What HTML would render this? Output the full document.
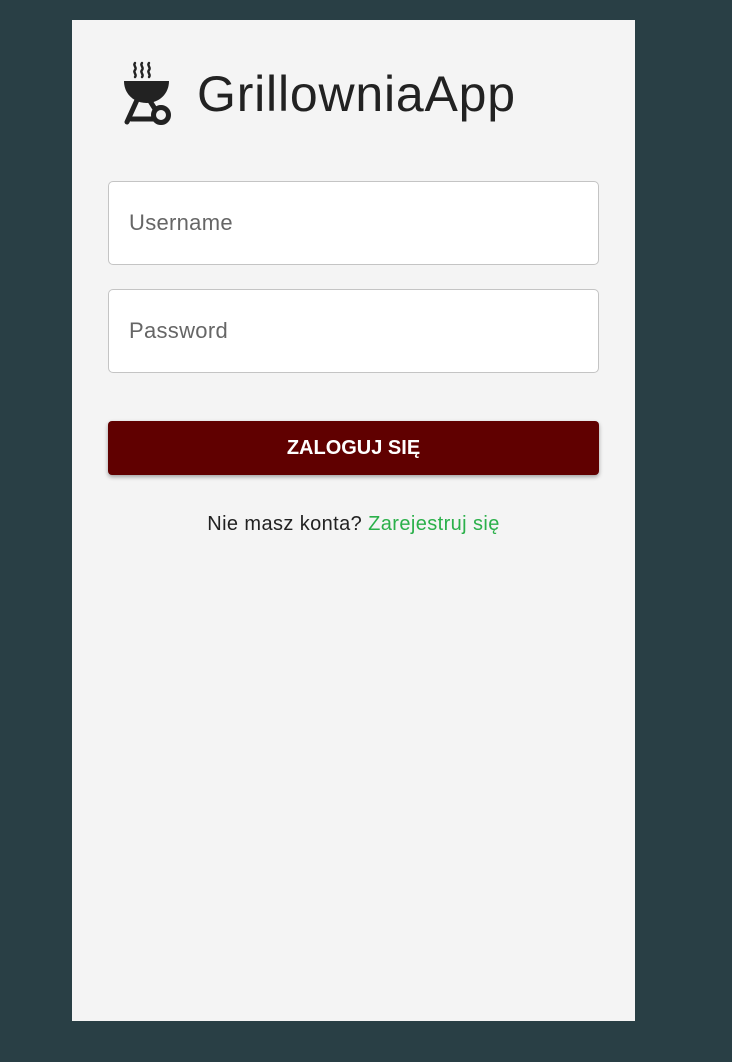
<!DOCTYPE html>
<html><head><style>
body{margin:0;width:732px;height:1062px;background:#293f45;font-family:"Liberation Sans",sans-serif;position:relative;overflow:hidden}
.card{position:absolute;left:72px;top:20px;width:563px;height:1001px;background:#f4f4f4}
.title{position:absolute;left:197px;top:64px;font-size:50px;color:#222;line-height:60px;letter-spacing:0.8px}
.inp{position:absolute;left:108px;width:489px;height:82px;background:#fff;border:1px solid #c4c4c4;border-radius:5px}
.inp span{position:absolute;left:20px;top:28px;font-size:22px;color:#666;letter-spacing:0.3px}
.btn{position:absolute;left:108px;top:421px;width:491px;height:54px;background:#600000;border-radius:4px;box-shadow:0 2px 4px rgba(0,0,0,.35);color:#fff;font-weight:bold;font-size:20px;text-align:center;line-height:54px}
.reg{position:absolute;top:513px;text-align:center;font-size:20px;color:#222;letter-spacing:0.4px}
.reg a{color:#2bb04a;text-decoration:none}
</style></head><body>
<div class="card"></div>
<svg style="position:absolute;left:118px;top:58px" width="60" height="72" viewBox="118 58 60 72">
<g fill="none" stroke="#222" stroke-width="2.4" stroke-linecap="round">
<path d="M135 63c-2.5 2.5 2.5 4.5 0 7s2.5 4.5 0 7"/><path d="M142 63c-2.5 2.5 2.5 4.5 0 7s2.5 4.5 0 7"/><path d="M149 63c-2.5 2.5 2.5 4.5 0 7s2.5 4.5 0 7"/>
</g>
<path d="M124 81h45c0 13-10 22-22.5 22S124 94 124 81z" fill="#222"/>
<g stroke="#222" stroke-width="5" stroke-linecap="round" fill="none">
<path d="M137 100L127 122"/><path d="M131 119h22"/><path d="M150 101l5 8"/>
</g>
<circle cx="161" cy="115" r="7.5" fill="none" stroke="#222" stroke-width="5"/>
</svg>
<div class="title">GrillowniaApp</div>
<div class="inp" style="top:181px"><span>Username</span></div>
<div class="inp" style="top:289px"><span>Password</span></div>
<div class="btn">ZALOGUJ SIĘ</div>
<div class="reg" style="left:0;width:707px">Nie masz konta? <a>Zarejestruj się</a></div>
</body></html>
